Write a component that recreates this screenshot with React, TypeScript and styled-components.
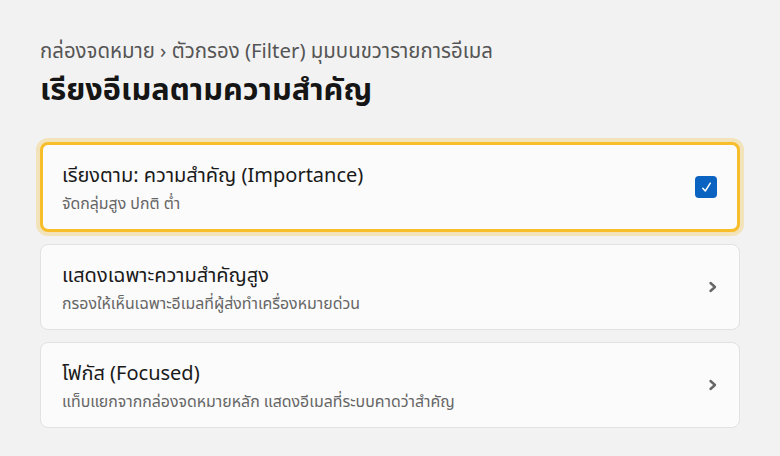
import styled, { createGlobalStyle } from "styled-components";

const GlobalStyle = createGlobalStyle`
  html, body {
    margin: 0;
    padding: 0;
    background: #f2f2f2;
  }
  body {
    font-family: "Noto Sans", "Noto Sans Thai", "DejaVu Sans", sans-serif;
  }
`;

const Page = styled.div`
  width: 780px;
  height: 456px;
  box-sizing: border-box;
  padding: 36px 40px 0 40px;
  display: flex;
  flex-direction: column;
`;

const Breadcrumb = styled.div`
  font-size: 20.4px;
  color: #555;
  line-height: 28px;
`;

const Title = styled.h1`
  margin: 4px 0 34px 0;
  font-size: 30.7px;
  font-weight: 700;
  color: #151515;
  line-height: 40px;
`;

const List = styled.div`
  display: flex;
  flex-direction: column;
  gap: 12px;
`;

const Card = styled.div<{ $active?: boolean }>`
  box-sizing: border-box;
  height: ${(p) => (p.$active ? "90px" : "86px")};
  display: flex;
  align-items: center;
  justify-content: space-between;
  padding: 0 20px 0 ${(p) => (p.$active ? "19px" : "21px")};
  background: #fbfbfb;
  border-radius: 8px;
  border: ${(p) => (p.$active ? "3px solid #f7bd2b" : "1px solid #e2e2e2")};
  box-shadow: ${(p) =>
    p.$active ? "0 0 0 4px rgba(247, 189, 43, 0.28)" : "none"};
`;

const Texts = styled.div`
  display: flex;
  flex-direction: column;
  gap: 4px;
`;

const CardTitle = styled.div`
  font-size: 20px;
  color: #1a1a1a;
  line-height: 28px;
`;

const CardSub = styled.div`
  font-size: 15.9px;
  color: #666;
  line-height: 20px;
`;

const Check = styled.div`
  width: 22px;
  height: 22px;
  border-radius: 4px;
  background: #0a63c0;
  display: flex;
  align-items: center;
  justify-content: center;
`;

const Chevron = styled.div`
  width: 12px;
  display: flex;
  justify-content: center;
`;

const ChevronIcon = () => (
  <svg width="10" height="12" viewBox="0 0 10 12">
    <path
      d="M2.5 2 L7 6 L2.5 10"
      fill="none"
      stroke="#666"
      strokeWidth="2.4"
      strokeLinecap="round"
      strokeLinejoin="round"
    />
  </svg>
);

export default function App() {
  return (
    <>
      <GlobalStyle />
      <Page>
        <Breadcrumb>กล่องจดหมาย › ตัวกรอง (Filter) มุมบนขวารายการอีเมล</Breadcrumb>
        <Title>เรียงอีเมลตามความสำคัญ</Title>
        <List>
          <Card $active>
            <Texts>
              <CardTitle>เรียงตาม: ความสำคัญ (Importance)</CardTitle>
              <CardSub>จัดกลุ่มสูง ปกติ ต่ำ</CardSub>
            </Texts>
            <Check>
              <svg width="13" height="13" viewBox="0 0 13 13">
                <path
                  d="M2.8 7.2 L5.3 10 L10.3 2.2"
                  fill="none"
                  stroke="#fff"
                  strokeWidth="1.5"
                  strokeLinecap="round"
                  strokeLinejoin="round"
                />
              </svg>
            </Check>
          </Card>
          <Card>
            <Texts>
              <CardTitle>แสดงเฉพาะความสำคัญสูง</CardTitle>
              <CardSub>กรองให้เห็นเฉพาะอีเมลที่ผู้ส่งทำเครื่องหมายด่วน</CardSub>
            </Texts>
            <Chevron>
              <ChevronIcon />
            </Chevron>
          </Card>
          <Card>
            <Texts>
              <CardTitle>โฟกัส (Focused)</CardTitle>
              <CardSub>แท็บแยกจากกล่องจดหมายหลัก แสดงอีเมลที่ระบบคาดว่าสำคัญ</CardSub>
            </Texts>
            <Chevron>
              <ChevronIcon />
            </Chevron>
          </Card>
        </List>
      </Page>
    </>
  );
}
